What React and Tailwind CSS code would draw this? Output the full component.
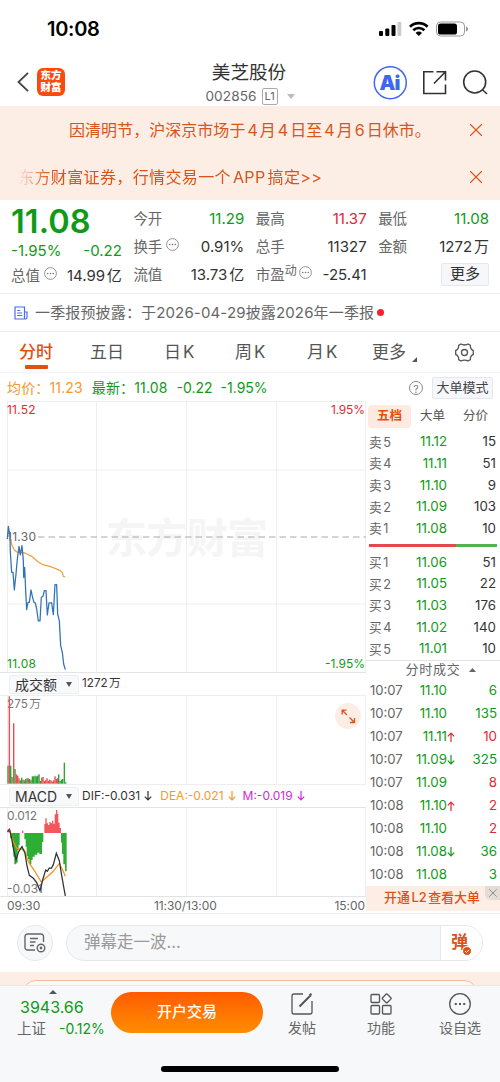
import { X } from 'lucide-react';

const asks = [
  ['卖5', '11.12', '15'],
  ['卖4', '11.11', '51'],
  ['卖3', '11.10', '9'],
  ['卖2', '11.09', '103'],
  ['卖1', '11.08', '10'],
];

const bids = [
  ['买1', '11.06', '51'],
  ['买2', '11.05', '22'],
  ['买3', '11.03', '176'],
  ['买4', '11.02', '140'],
  ['买5', '11.01', '10'],
];

const trades = [
  { time: '10:07', price: '11.10', volume: '6', side: 'sell' },
  { time: '10:07', price: '11.10', volume: '135', side: 'sell' },
  { time: '10:07', price: '11.11', dir: 'up', volume: '10', side: 'buy' },
  { time: '10:07', price: '11.09', dir: 'down', volume: '325', side: 'sell' },
  { time: '10:07', price: '11.09', volume: '8', side: 'buy' },
  { time: '10:08', price: '11.10', dir: 'up', volume: '2', side: 'buy' },
  { time: '10:08', price: '11.10', volume: '2', side: 'buy' },
  { time: '10:08', price: '11.08', dir: 'down', volume: '36', side: 'sell' },
  { time: '10:08', price: '11.08', volume: '3', side: 'sell' },
];

// [x, height, color]
const volumeBars = [
  [22, 54, 'g'], [26, 262, 'r'], [30, 54, 'g'], [34, 20, 'g'], [39, 181, 'r'], [43, 44, 'g'],
  [47, 28, 'r'], [51, 24, 'r'], [55, 16, 'r'], [59, 10, 'g'], [63, 18, 'g'], [67, 12, 'g'],
  [71, 10, 'r'], [75, 14, 'g'], [79, 16, 'g'], [83, 16, 'r'], [87, 14, 'g'], [91, 10, 'g'],
  [95, 22, 'g'], [99, 22, 'g'], [103, 24, 'g'], [107, 22, 'g'], [111, 24, 'g'], [115, 28, 'g'],
  [119, 8, 'g'], [123, 18, 'r'], [127, 20, 'r'], [131, 8, 'r'], [135, 10, 'r'], [139, 16, 'r'],
  [143, 8, 'r'], [147, 12, 'r'], [151, 10, 'r'], [155, 6, 'r'], [159, 10, 'r'], [163, 22, 'r'],
  [167, 14, 'r'], [171, 16, 'r'], [174, 28, 'g'], [178, 8, 'g'], [182, 12, 'g'], [186, 14, 'g'],
  [191, 63, 'g'], [195, 4, 'g'],
];

const macdUp = 'M133 489V462H136V445H140V460H144V465H148V456H152V460H156V452H160V462H164V433H168V420H172V432H175V458H179V474H183V489Z';
const macdDown = 'M30 489H59V525H56V540H53V578H49V583H43V560H40V530H36V505H30ZM73 489H130V516H126V552H118V548H112V554H104V560H98V570H94V583H88V568H84V558H80V530H77V508H73ZM183 489H200V604H195V583H190V552H186V518H183Z';

export default function App() {
  return (
    <div className="flex h-[1082px] w-[500px] flex-col overflow-hidden bg-white font-['Inter','Noto_Sans_CJK_SC',sans-serif] text-[#333] [text-autospace:normal]">
      <StatusBar />
      <Header />
      <Notices />
      <Quote />
      <News />
      <Tabs />
      <div className="flex h-[28px] shrink-0 items-center pt-px pr-[7px] pl-[7px] text-[14px]">
        <span className="tracking-[0.15px] text-[#f29a2e]">均价：11.23</span>
        <span className="ml-[9px] tracking-[0.15px] text-[#0f9a17]">最新：11.08</span>
        <span className="ml-[9px] text-[#0f9a17]">-0.22</span>
        <span className="ml-[8px] text-[#0f9a17]">-1.95%</span>
        <span className="ml-auto grid size-[14px] place-items-center rounded-full border border-[#888] text-[10px] text-[#777]">?</span>
        <span className="ml-[9px] flex h-[22px] w-[61px] items-center justify-center rounded-[2px] border border-[#e6e8ee] bg-[#f6f7fa] text-[13px] whitespace-nowrap text-[#444]">大单模式</span>
      </div>
      <div className="flex h-[513px] shrink-0 border-b border-[#eee]">
        <Charts />
        <OrderBook />
      </div>
      <CommentBar />
      <div className="h-[13px] shrink-0 overflow-hidden bg-[#fdeee5] px-[22px] pt-[8px]">
        <div className="h-[30px] rounded-[14px] border border-[#f5bda3] bg-[#fff7f2]" />
      </div>
      <BottomBar />
    </div>
  );
}

function StatusBar() {
  return (
    <div className="flex h-[57px] shrink-0 items-center pr-[31px] pl-[47px] text-black">
      <span className="text-[20px] font-semibold tracking-[-0.3px]">10:08</span>
      <svg className="ml-auto" width="91" height="18" viewBox="0 0 91 18">
        <g>
          <rect x="1" y="11" width="4" height="5" rx="1" />
          <rect x="7.3" y="8.5" width="4" height="7.5" rx="1" />
          <rect x="13.5" y="5" width="4" height="11" rx="1" />
          <rect x="19.5" y="2" width="3.8" height="14" rx="1" fill="#ccc" />
        </g>
        <g fill="none" stroke="#000" strokeWidth="2.7">
          <path d="M32 6.8a12.6 12.6 0 0 1 17.6 0" />
          <path d="M35.2 10.3a8 8 0 0 1 11.2 0" />
        </g>
        <path d="M37.6 12.9a4.6 4.6 0 0 1 6.4 0L40.8 16Z" />
        <rect x="58.5" y="2" width="28" height="14" rx="4" fill="none" stroke="#999" />
        <rect x="60" y="3.5" width="19" height="11" rx="2.6" />
        <path d="M88 6.5v5c1.6-.6 2-1.5 2-2.5s-.4-1.9-2-2.5Z" fill="#999" />
      </svg>
    </div>
  );
}

function Header() {
  return (
    <div className="flex h-[49px] shrink-0 items-center pr-[11px] pl-[17px]">
      <svg className="mr-[8px]" width="12" height="20" viewBox="0 0 12 20" fill="none" stroke="#444" strokeWidth="1.8">
        <path d="M11 .8L1.5 10L11 19.2" />
      </svg>
      <div className="grid size-[28px] place-content-center rounded-[6px] bg-[#fb4a0c] text-center text-[10.5px] leading-[11.5px] font-black text-white">
        <span>东方</span>
        <span>财富</span>
      </div>
      <div className="ml-[138px] flex w-[92px] flex-col items-center">
        <span className="text-[18.6px] leading-[26px] whitespace-nowrap text-[#333]">美芝股份</span>
        <div className="-mb-[2px] flex h-[22px] items-center pt-[2px] text-[13.6px] tracking-[0.1px] text-[#666]">
          <span>002856</span>
          <span className="ml-[5px] grid h-[17px] w-[16px] place-items-center rounded-[2px] border border-[#aaa] text-[11px] leading-none tracking-normal">L1</span>
          <svg className="mr-[-2px] ml-[9px]" width="8" height="5" viewBox="0 0 8 5"><path d="M0 0h8L4 5Z" fill="#bbb" /></svg>
        </div>
      </div>
      <svg className="ml-auto" width="116" height="36" viewBox="374 62 116 36" fill="none">
        <circle cx="391.3" cy="80.7" r="16" stroke="#3e66f0" strokeWidth="1.5" />
        <text x="380.5" y="88" textLength="21" fill="#3e66f0" className="text-[20px] font-black">Ai</text>
        <g stroke="#333" strokeWidth="1.6">
          <path d="M434.5 69.8H424.8V91.5H446.5V82.5M437.5 69.8H446.5V78.5M446 70.3L435 81.5" />
          <circle cx="475.7" cy="80" r="11" />
          <path d="M483.2 87.5L488 92" />
        </g>
      </svg>
    </div>
  );
}

function Notices() {
  return (
    <div className="h-[94px] shrink-0 bg-[#fdeee5] text-[16px] text-[#d9541b]">
      <div className="flex h-[47px] items-center pr-[13px] pl-[69px]">
        <span className="tracking-[0.04px] whitespace-nowrap">因清明节，沪深京市场于4月4日至4月6日休市。</span>
        <X className="ml-auto size-[22px]" strokeWidth={1.2} />
      </div>
      <div className="flex h-[47px] items-center pr-[13px] pl-[18px]">
        <span className="tracking-[0.38px] whitespace-nowrap [mask-image:linear-gradient(to_right,transparent,black_32px)]">东方财富证券，行情交易一个APP搞定&gt;&gt;</span>
        <X className="ml-auto size-[22px]" strokeWidth={1.2} />
      </div>
    </div>
  );
}

function Quote() {
  return (
    <div className="grid h-[94px] shrink-0 grid-cols-4 gap-x-[11.5px] border-b border-[#f0f0f0] px-[11px] pt-[5px] text-[15px]">
      <div>
        <div className="h-[34px] text-[32.5px] leading-[33px] font-semibold tracking-[0.1px] text-[#0f9a17]">11.08</div>
        <div className="flex h-[23px] items-center justify-between pt-[2px] text-[15px] text-[#0f9a17]">
          <span>-1.95%</span>
          <span>-0.22</span>
        </div>
        <Field label="总值" value="14.99亿" more />
      </div>
      <div>
        <Field label="今开" value="11.29" tone="text-[#0f9a17]" />
        <Field label="换手" value="0.91%" more />
        <Field label="流值" value="13.73亿" />
      </div>
      <div>
        <Field label="最高" value="11.37" tone="text-[#e02936]" />
        <Field label="总手" value="11327" />
        <Field label={<>市盈<sup className="-top-[5px] text-[12px] leading-none">动</sup></>} value="-25.41" more tight />
      </div>
      <div>
        <Field label="最低" value="11.08" tone="text-[#0f9a17]" />
        <Field label="金额" value="1272万" />
        <div className="mt-[2px] ml-auto flex h-[23px] w-[48px] items-center justify-center rounded-[2px] border border-[#e6e8ee] bg-[#f6f7fa] text-[15px]">更多</div>
      </div>
    </div>
  );
}

function Field({ label, value, tone = 'text-[#333]', more, tight }) {
  return (
    <div className="flex h-[28px] items-center whitespace-nowrap">
      <span className="text-[14.5px] text-[#666]">{label}</span>
      {more && <MoreDots className={tight ? 'ml-[2px]' : 'ml-[4px]'} />}
      <span className={`ml-auto ${tone}`}>{value}</span>
    </div>
  );
}

function MoreDots({ className }) {
  return (
    <svg className={`mb-[5px] ${className}`} width="13" height="13" viewBox="0 0 13 13">
      <circle cx="6.5" cy="6.5" r="5.9" fill="none" stroke="#888" strokeWidth="0.9" />
      <g fill="#777">
        <circle cx="3.7" cy="6.5" r="0.8" />
        <circle cx="6.5" cy="6.5" r="0.8" />
        <circle cx="9.3" cy="6.5" r="0.8" />
      </g>
    </svg>
  );
}

function News() {
  return (
    <div className="flex h-[38px] shrink-0 items-center border-b border-[#f0f0f0] pl-[14px]">
      <svg width="14" height="14" viewBox="0 0 14 14" fill="none" stroke="#4a6cf0" strokeWidth="1.2">
        <path d="M1 1h9.5v12H1ZM10.5 6H13v5.5c0 1-.6 1.5-1.4 1.5H2M3.2 4.5h3M3.2 7h5M3.2 9.5h5" />
      </svg>
      <span className="ml-[7px] pt-px text-[15px] tracking-[0.15px] whitespace-nowrap text-[#666] [text-autospace:no-autospace]">一季报预披露：于2026-04-29披露2026年一季报</span>
      <span className="ml-[3px] size-[7px] rounded-full bg-[#f5222d]" />
    </div>
  );
}

function Tabs() {
  return (
    <div className="flex h-[41px] shrink-0 items-center border-b border-[#f4f4f4] pt-[2px] pl-[19px] text-[17px] whitespace-nowrap text-[#555]">
      <span className="relative w-[71px] font-medium text-[#e2500f]">
        分时
        <i className="absolute top-[25px] left-[6px] h-[4px] w-[23px] rounded-[1px] bg-[#e2500f]" />
      </span>
      <span className="w-[74px]">五日</span>
      <span className="w-[71px]">日K</span>
      <span className="w-[72px]">周K</span>
      <span className="w-[65px]">月K</span>
      <span>更多</span>
      <svg className="mt-[12px] ml-[6px]" width="5" height="5" viewBox="0 0 5 5"><path d="M5 0v5H0Z" fill="#555" /></svg>
      <svg className="mb-px ml-[38px]" width="19" height="19" viewBox="0 0 19 19" fill="none" stroke="#555" strokeWidth="1.3" strokeLinejoin="round">
        <path d="M6 1C7.5 2.3 11.5 2.3 13 1L15.4 2.4C15 4.5 16.5 7 18.3 7.5V11.5C16.5 12 15 14.5 15.4 16.6L13 18C11.5 16.7 7.5 16.7 6 18L3.6 16.6C4 14.5 2.5 12 .7 11.5V7.5C2.5 7 4 4.5 3.6 2.4Z" />
        <circle cx="9.5" cy="9.5" r="3" />
      </svg>
    </div>
  );
}

function Charts() {
  return (
    <div className="flex w-[366px] flex-col">
      <svg className="shrink-0" width="366" height="271" viewBox="0 0 366 271">
        <Grid height={271} />
        <path d="M7 .5H366M7 69H366M7 203H366" stroke="#eee" />
        <text x="106" y="152" textLength="162" fill="#f5f5f6" className="text-[41px] font-bold">东方财富</text>
        <path d="M38 136H366" stroke="#aaa" strokeWidth="1.2" strokeDasharray="6.5 4" />
        <text x="7" y="13" textLength="28.5" fill="#e02936" className="text-[12px]">11.52</text>
        <text x="331" y="13" textLength="34" fill="#e02936" className="text-[12px]">1.95%</text>
        <text x="7" y="140" textLength="29" fill="#666" className="text-[12px]">11.30</text>
        <text x="7" y="267" textLength="29" fill="#0f9a17" className="text-[12px]">11.08</text>
        <text x="325" y="267" textLength="40" fill="#0f9a17" className="text-[12px]">-1.95%</text>
        <g transform="translate(0 118) scale(0.3333)" fill="none" strokeWidth="3.8" strokeLinejoin="round">
          <path d="M24 48L32 60L36 80L43 93L52 100L75 102L95 112L115 129L130 138L150 142L180 154L187 161L190 172L196 174" stroke="#f2a03c" />
          <path d="M22 60L25 22L30 50L31 100L35 160L39 160L43 213L48 165L52 120L57 82L61 108L66 80L70 125L71 175L74 145L77 215L80 272L84 250L88 250L93 213L97 232L102 250L106 252L110 270L115 306L120 306L124 235L129 232L133 215L138 215L142 288L147 252L155 252L160 287L165 197L170 197L173 285L178 305L182 380L187 400L191 435L196 452" stroke="#3273b8" />
        </g>
      </svg>
      <div className="flex h-[23px] shrink-0 items-center border-t border-[#e4e4e6] pl-[9px] text-[11.7px]">
        <Picker>成交额</Picker>
        <span className="ml-[3px]">1272万</span>
      </div>
      <div className="relative h-[89px] shrink-0 border-t border-[#eee]">
        <svg width="366" height="88" viewBox="0 1 366 88">
          <Grid height={89} />
          <text x="7" y="13" textLength="34" fill="#777" className="text-[11.7px]">275万</text>
          <g transform="translate(0 -25) scale(0.3333)">
            {volumeBars.map(([x, h, c]) => (
              <rect key={x} x={x} y={341 - h} width="4.2" height={h} fill={c === 'r' ? '#ef4b52' : '#31a13a'} />
            ))}
          </g>
        </svg>
        <svg className="absolute top-[7px] left-[335px]" width="26" height="26" viewBox="0 0 26 26" fill="none" stroke="#d9541b" strokeWidth="1.3">
          <circle cx="13" cy="13" r="13" fill="#fdeee5" stroke="none" />
          <path d="M12 12L7.5 7.5M7.2 11.5V7.2H11.5M14.5 14.5L19 19M19.5 15V19.5H15" />
        </svg>
      </div>
      <div className="flex h-[23px] shrink-0 items-center border-t border-[#eee] pl-[9px] text-[12px] whitespace-nowrap">
        <Picker>MACD</Picker>
        <Indicator tone="ml-[3px]">DIF:-0.031</Indicator>
        <Indicator tone="ml-[8px] text-[#f29a2e]">DEA:-0.021</Indicator>
        <Indicator tone="ml-[7px] text-[#d428d8]">M:-0.019</Indicator>
      </div>
      <div className="h-[90px] shrink-0 border-y border-[#e4e4e6]">
        <svg width="366" height="88" viewBox="0 1 366 88">
          <Grid height={90} />
          <text x="7" y="13" textLength="30" fill="#777" className="text-[12px]">0.012</text>
          <text x="7" y="85.5" textLength="36" fill="#777" className="text-[12px]">-0.031</text>
          <g transform="translate(0 -137) scale(0.3333)">
            <path d={macdUp} fill="#f4565b" />
            <path d={macdDown} fill="#2fae35" />
            <path d="M66 489V482H70V489Z" fill="#f4565b" />
            <path d="M24 480L30 483L40 515L50 535L62 537L74 541L85 575L105 605L124 636L140 622L160 604L178 580L188 600L196 619" fill="none" stroke="#f2921e" strokeWidth="3.6" />
            <path d="M22 485L28 478L34 500L41 540L48 570L56 545L66 530L75 550L81 588L88 616L100 625L110 638L120 662L128 630L137 600L142 604L148 594L154 595L160 584L169 550L178 572L184 610L190 645L196 678" fill="none" stroke="#333" strokeWidth="3.8" />
            <path d="M22 487L28 476L34 487Z" fill="#a3333b" />
          </g>
        </svg>
      </div>
      <div className="flex h-[16px] shrink-0 items-center justify-between pt-px pl-[7px] text-[12px] tracking-[-0.05px] text-[#666]">
        <span>09:30</span>
        <span className="pr-[4px]">11:30/13:00</span>
        <span className="pr-px">15:00</span>
      </div>
    </div>
  );
}

function Grid({ height }) {
  return <path d={`M7.5 0V${height}M96.5 0V${height}M186.5 0V${height}M276.5 0V${height}M365.5 0V${height}`} stroke="#eee" />;
}

function Picker({ children }) {
  return (
    <span className="flex h-[19px] w-[70px] items-center justify-between rounded-[2px] border border-[#eceef2] bg-[#f8f9fb] pr-[6px] pl-[5px] text-[14px] text-[#333]">
      {children}
      <svg width="6" height="5" viewBox="0 0 6 5"><path d="M0 0h6L3 5Z" fill="#555" /></svg>
    </span>
  );
}

function Indicator({ tone, children }) {
  return (
    <span className={`flex items-center gap-[4px] ${tone}`}>
      {children}
      <Arrow />
    </span>
  );
}

function Arrow({ up }) {
  return (
    <svg width="8" height="10" viewBox="0 0 8 10" fill="none" stroke="currentColor" strokeWidth="1.2">
      <path d={up ? 'M4 10V1M.8 4.3L4 1L7.2 4.3' : 'M4 0V9M.8 5.7L4 9L7.2 5.7'} />
    </svg>
  );
}

function OrderBook() {
  return (
    <div className="flex w-[134px] flex-col text-[13.3px]">
      <div className="flex h-[30.5px] items-center pl-[2px] text-[12.5px] text-[#555]">
        <span className="grid h-[23px] w-[43px] place-items-center rounded-[4px] bg-[#fdeae0] font-bold text-[#e2500f]">五档</span>
        <span className="ml-[9px]">大单</span>
        <span className="ml-[18px]">分价</span>
      </div>
      {asks.map((row) => <Level key={row[0]} row={row} />)}
      <div className="mt-[5px] mr-[3px] mb-[4.5px] ml-[3px] flex h-[3px] shrink-0">
        <span className="w-[86.5px] bg-[#e5484d]" />
        <span className="flex-1 bg-[#53b152]" />
      </div>
      {bids.map((row) => <Level key={row[0]} row={row} />)}
      <div className="flex h-[19.5px] shrink-0 items-center justify-center border-t border-[#e4e4e6] pl-[15px] text-[13px] text-[#666]">
        <span className="tracking-[0.8px]">分时成交</span>
        <svg className="ml-[8px]" width="7" height="4" viewBox="0 0 7 4"><path d="M0 4h7L3.5 0Z" fill="#666" /></svg>
      </div>
      {trades.map((t, i) => (
        <div key={i} className="flex h-[23px] shrink-0 items-center pr-[3px] pl-[4px]">
          <span className="w-[38px] text-[13.1px] text-[#666]">{t.time}</span>
          <span className="w-[39px] text-right text-[#0f9a17]">{t.price}</span>
          <span className={t.dir === 'up' ? 'text-[#e02936]' : 'text-[#0f9a17]'}>
            {t.dir && <Arrow up={t.dir === 'up'} />}
          </span>
          <span className={`ml-auto ${t.side === 'buy' ? 'text-[#e02936]' : 'text-[#0f9a17]'}`}>{t.volume}</span>
        </div>
      ))}
      <div className="relative flex h-[25px] shrink-0 items-center bg-[#fdeee5] pr-px pb-[2px] pl-[18px] text-[12.9px] font-medium whitespace-nowrap text-[#e2500f]">
        开通L2查看大单
        <span className="absolute top-0 right-0 grid h-[14px] w-[15px] place-items-center rounded-bl-[6px] bg-[#e6dcd6]">
          <X className="size-[14px] text-[#777]" strokeWidth={1.3} />
        </span>
      </div>
    </div>
  );
}

function Level({ row }) {
  return (
    <div className="flex h-[21.6px] shrink-0 items-center pr-[4px] pl-[3px]">
      <span className="w-[38px] text-[12.7px] text-[#666]">{row[0]}</span>
      <span className="w-[40px] text-right text-[#0f9a17]">{row[1]}</span>
      <span className="ml-auto">{row[2]}</span>
    </div>
  );
}

function CommentBar() {
  return (
    <div className="flex h-[58px] shrink-0 items-center px-[17px]">
      <div className="grid size-[36px] place-items-center rounded-full border border-[#e6e8ec] bg-[#f7f8fa]">
        <svg width="22" height="20" viewBox="0 0 22 20" fill="none" stroke="#666" strokeWidth="1.4">
          <path d="M11 17H3.5A2.5 2.5 0 0 1 1 14.5V3.5A2.5 2.5 0 0 1 3.5 1H17A2.5 2.5 0 0 1 19.5 3.5V9M6 5.5H14M6 9H11.5M6 12.5H10" />
          <circle cx="17" cy="15" r="3.8" />
          <circle cx="17" cy="15" r="0.7" />
        </svg>
      </div>
      <div className="ml-[13px] flex h-[36px] w-[417px] overflow-hidden rounded-full border border-[#e6e8ec] bg-[#f7f8fa]">
        <span className="flex-1 pl-[17px] text-[16.5px] leading-[32px] text-[#999]">弹幕走一波...</span>
        <span className="flex w-[42px] items-center border-l border-[#e6e8ec] bg-white pl-[10px]">
          <span className="relative text-[17px] font-bold text-[#d9541b]">
            弹
            <svg className="absolute right-[-4px] bottom-0" width="10" height="10" viewBox="0 0 10 10">
              <circle cx="5" cy="5" r="4.5" fill="#d9541b" stroke="#fff" />
              <path d="M3 5L4.5 6.5L7.2 3.8" fill="none" stroke="#fff" />
            </svg>
          </span>
        </span>
      </div>
    </div>
  );
}

function BottomBar() {
  return (
    <div className="flex h-[97px] shrink-0 flex-col border-t border-[#e6e6e8] bg-[#f6f8fa]">
      <div className="flex h-[56px] items-start pl-[17px] whitespace-nowrap">
        <div className="flex w-[94px] flex-col">
          <svg className="mt-[4px] ml-[32px]" width="8" height="4" viewBox="0 0 8 4"><path d="M0 4h8L4 0Z" fill="#555" /></svg>
          <span className="ml-[3px] text-[16px] leading-[27px] text-[#0f9a17]">3943.66</span>
          <span className="flex items-baseline text-[14.5px] leading-[16px] text-[#666]">
            上证
            <span className="ml-[13px] text-[14px] text-[#0f9a17]">-0.12%</span>
          </span>
        </div>
        <button type="button" className="mt-[6px] h-[41px] w-[152px] rounded-full bg-linear-to-b from-[#ff5a00] to-[#ff8c00] text-[15px] font-medium text-white">开户交易</button>
        <Action label="发帖" className="ml-[9px] w-[60px]">
          <path d="M12 1H3a2 2 0 0 0-2 2V19a2 2 0 0 0 2 2H19a2 2 0 0 0 2-2V8" />
          <path d="M8.5 13.5L20 2M18.5 2L20.5 .8" strokeWidth="2" />
        </Action>
        <Action label="功能" className="ml-[19px] w-[60px]">
          <rect x="1" y="1.5" width="8.5" height="8" rx="1" />
          <rect x="1" y="12.5" width="8.5" height="8.5" rx="1" />
          <rect x="12.5" y="12.5" width="8.5" height="8.5" rx="1" />
          <rect x="13.3" y="2" width="6.8" height="6.8" rx="1" transform="rotate(45 16.7 5.4)" />
        </Action>
        <Action label="设自选" className="ml-[19px] w-[60px]">
          <circle cx="11" cy="11" r="10.3" />
          <path d="M5.8 11h2M10 11h2M14.2 11h2" strokeWidth="2" />
        </Action>
      </div>
      <div className="mt-[24px] ml-[161px] h-[6px] w-[178px] rounded-full bg-black" />
    </div>
  );
}

function Action({ label, className, children }) {
  return (
    <div className={`flex flex-col items-center pt-[7px] text-[14px] text-[#666] ${className}`}>
      <svg width="22" height="22" viewBox="0 0 22 22" fill="none" stroke="#555" strokeWidth="1.3">{children}</svg>
      <span className="mt-[3px] leading-[20px]">{label}</span>
    </div>
  );
}
